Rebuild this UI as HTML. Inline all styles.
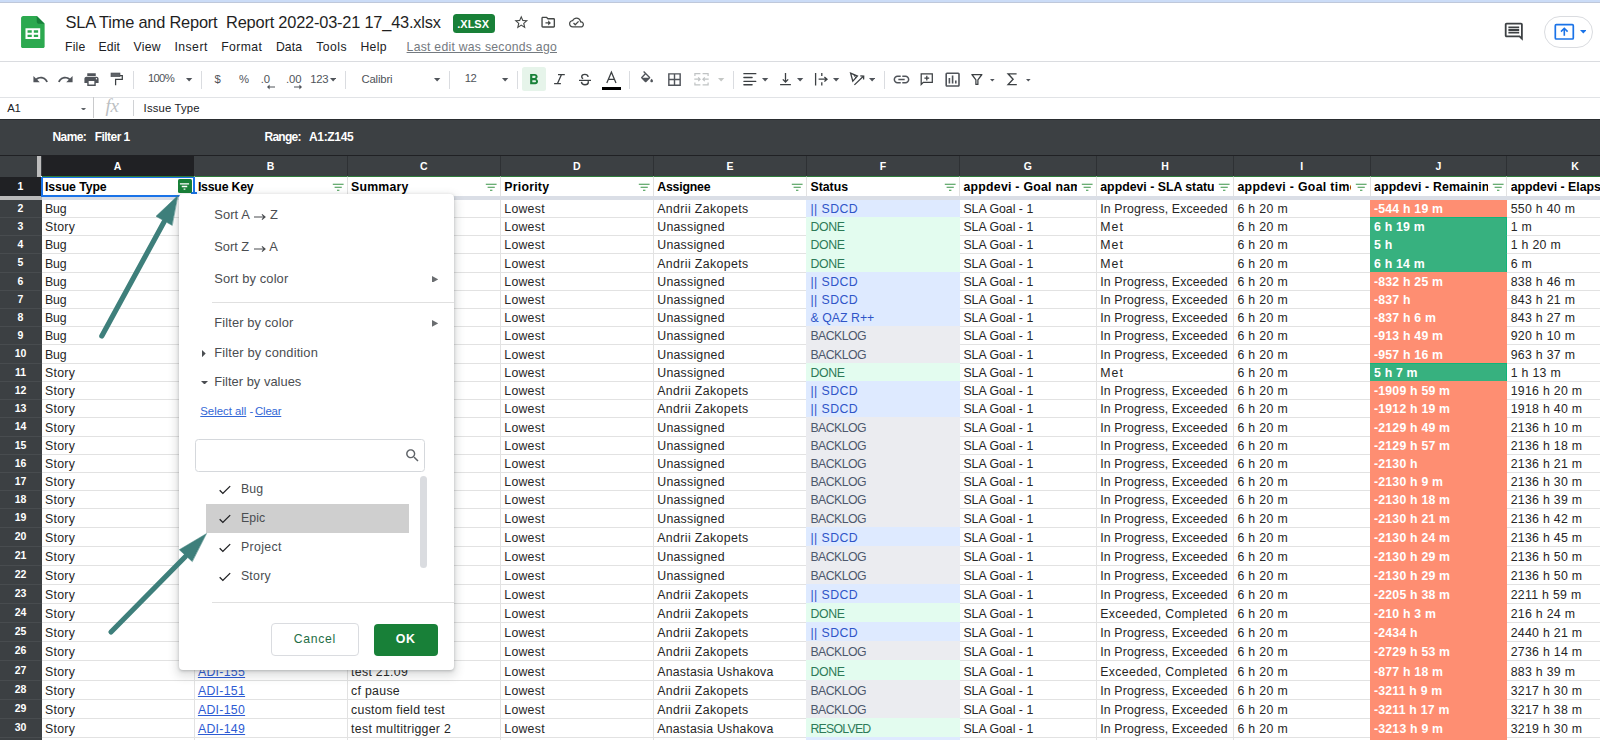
<!DOCTYPE html>
<html><head><meta charset="utf-8"><title>SLA Time and Report</title>
<style>
*{box-sizing:border-box;margin:0;padding:0}
html,body{width:1600px;height:740px;overflow:hidden;background:#fff}
body{font-family:"Liberation Sans",sans-serif;position:relative;color:#202124}
.abs{position:absolute}
.t{position:absolute;white-space:pre;line-height:20px}
svg{position:absolute;display:block}
/* top */
#strip{left:0;top:0;width:1600px;height:2px;background:#cbdcf7}
#strip2{left:0;top:2px;width:1600px;height:1px;background:#bfc8da}
.hl{position:absolute;left:0;width:1600px;height:1px;background:#dadce0}
.vs{position:absolute;width:1px;background:#dadce0;top:71px;height:18px}
.tb{fill:#50545a}
.dd{position:absolute;width:0;height:0;border-left:3.5px solid transparent;border-right:3.5px solid transparent;border-top:3.5px solid #444746}
/* dark filter bar */
#fbar{left:0;top:119px;width:1600px;height:37px;background:#3c4043;border-top:1px solid #2a2d30;border-bottom:1px solid #202124}
/* col headers */
#chrow{left:0;top:156px;width:1600px;height:20px;background:#3c4043}
.ch{position:absolute;top:156px;height:20px;line-height:20.4px;color:#fff;font-weight:700;font-size:10.5px;text-align:center;background:#3c4043;border-right:1px solid #2e3134}
.ch.sel{background:#202124;border-right:none}
/* row headers */
.rh{position:absolute;left:0;width:42px;background:#3c4043;color:#fff;font-weight:700;font-size:10.5px;text-align:center;border-bottom:1px solid #484c4f;padding-right:1px}
/* header row */
.h1{position:absolute;top:176px;height:19.5px;background:#fff;border-right:1px solid #e2e2e2;border-top:1px solid #2f7d3c;overflow:hidden}
.h1t{position:absolute;left:3.4px;top:1px;right:18.5px;height:18px;line-height:18px;font-size:12.3px;font-weight:700;color:#000;white-space:pre;overflow:hidden}
.fi{right:1.4px;top:2.6px;width:14.4px;height:14.4px;fill:#3a9447}
/* grid */
#grid{left:41.5px;top:0;width:1559px;height:740px}
.r{position:absolute;left:0;width:1559px}
.c{position:absolute;top:0;height:100%;border-right:1px solid #e2e2e2;border-bottom:1px solid #e2e2e2;padding-left:3.4px;font-size:12.3px;white-space:pre;overflow:hidden;color:#262626}
.c.f{border:none;margin-left:-1px;padding-left:4.4px}
.c.j{color:#fff;font-weight:700}
.c.lk{color:#2d5bd3}
.c.lk span{text-decoration:underline}
/* popup */
#menu{left:178.5px;top:194px;width:275px;height:475.5px;background:#fff;border-radius:4px;box-shadow:0 1px 3px rgba(60,64,67,.3),0 4px 8px 3px rgba(60,64,67,.15)}
.mi{position:absolute;white-space:pre;line-height:20px;font-size:12.5px;color:#4a4d51}
</style></head><body>

<!-- ============ GRID (under everything) ============ -->
<div id="grid" class="abs">
<!-- GRID -->
<div class="r" style="top:200px;height:18px;line-height:18px"><div class="c" style="left:0.0px;width:153.0px;"><span style="letter-spacing:-0.06px">Bug</span></div><div class="c" style="left:153.0px;width:153.2px;"></div><div class="c" style="left:306.2px;width:153.2px;"></div><div class="c" style="left:459.4px;width:153.0px;"><span style="letter-spacing:0.26px">Lowest</span></div><div class="c" style="left:612.4px;width:153.2px;"><span style="letter-spacing:0.39px">Andrii Zakopets</span></div><div class="c f" style="left:765.6px;width:153.9px;background:#deeaff;color:#2f55c8;box-shadow:0 -1px #deeaff;"><span style="letter-spacing:0.41px">|| SDCD</span></div><div class="c" style="left:918.5px;width:136.9px;"><span style="letter-spacing:0.01px">SLA Goal - 1</span></div><div class="c" style="left:1055.4px;width:137.1px;"><span style="letter-spacing:0.14px">In Progress, Exceeded</span></div><div class="c" style="left:1192.5px;width:136.6px;"><span style="letter-spacing:0.34px">6 h 20 m</span></div><div class="c f j" style="left:1329.1px;width:137.7px;background:#fe8e72;box-shadow:0 -1px #fe8e72;"><span style="letter-spacing:0.20px">-544 h 19 m</span></div><div class="c" style="left:1465.8px;width:136.7px;"><span style="letter-spacing:0.30px">550 h 40 m</span></div></div>
<div class="r" style="top:218px;height:18px;line-height:18px"><div class="c" style="left:0.0px;width:153.0px;"><span style="letter-spacing:0.34px">Story</span></div><div class="c" style="left:153.0px;width:153.2px;"></div><div class="c" style="left:306.2px;width:153.2px;"></div><div class="c" style="left:459.4px;width:153.0px;"><span style="letter-spacing:0.26px">Lowest</span></div><div class="c" style="left:612.4px;width:153.2px;"><span style="letter-spacing:0.25px">Unassigned</span></div><div class="c f" style="left:765.6px;width:153.9px;background:#e3fcef;color:#2d7a57;box-shadow:0 -1px #e3fcef;"><span style="letter-spacing:-0.33px">DONE</span></div><div class="c" style="left:918.5px;width:136.9px;"><span style="letter-spacing:0.01px">SLA Goal - 1</span></div><div class="c" style="left:1055.4px;width:137.1px;"><span style="letter-spacing:1.07px">Met</span></div><div class="c" style="left:1192.5px;width:136.6px;"><span style="letter-spacing:0.34px">6 h 20 m</span></div><div class="c f j" style="left:1329.1px;width:137.7px;background:#37b17f;box-shadow:inset -1px 0 #10b47b,0 -1px #10b47b;"><span style="letter-spacing:0.20px">6 h 19 m</span></div><div class="c" style="left:1465.8px;width:136.7px;"><span style="letter-spacing:0.30px">1 m</span></div></div>
<div class="r" style="top:236px;height:18px;line-height:18px"><div class="c" style="left:0.0px;width:153.0px;"><span style="letter-spacing:-0.06px">Bug</span></div><div class="c" style="left:153.0px;width:153.2px;"></div><div class="c" style="left:306.2px;width:153.2px;"></div><div class="c" style="left:459.4px;width:153.0px;"><span style="letter-spacing:0.26px">Lowest</span></div><div class="c" style="left:612.4px;width:153.2px;"><span style="letter-spacing:0.25px">Unassigned</span></div><div class="c f" style="left:765.6px;width:153.9px;background:#e3fcef;color:#2d7a57;box-shadow:0 -1px #e3fcef;"><span style="letter-spacing:-0.33px">DONE</span></div><div class="c" style="left:918.5px;width:136.9px;"><span style="letter-spacing:0.01px">SLA Goal - 1</span></div><div class="c" style="left:1055.4px;width:137.1px;"><span style="letter-spacing:1.07px">Met</span></div><div class="c" style="left:1192.5px;width:136.6px;"><span style="letter-spacing:0.34px">6 h 20 m</span></div><div class="c f j" style="left:1329.1px;width:137.7px;background:#37b17f;box-shadow:inset -1px 0 #10b47b,0 -1px #37b17f;"><span style="letter-spacing:0.20px">5 h</span></div><div class="c" style="left:1465.8px;width:136.7px;"><span style="letter-spacing:0.30px">1 h 20 m</span></div></div>
<div class="r" style="top:254px;height:19px;line-height:20px"><div class="c" style="left:0.0px;width:153.0px;"><span style="letter-spacing:-0.06px">Bug</span></div><div class="c" style="left:153.0px;width:153.2px;"></div><div class="c" style="left:306.2px;width:153.2px;"></div><div class="c" style="left:459.4px;width:153.0px;"><span style="letter-spacing:0.26px">Lowest</span></div><div class="c" style="left:612.4px;width:153.2px;"><span style="letter-spacing:0.39px">Andrii Zakopets</span></div><div class="c f" style="left:765.6px;width:153.9px;background:#e3fcef;color:#2d7a57;box-shadow:0 -1px #e3fcef;"><span style="letter-spacing:-0.33px">DONE</span></div><div class="c" style="left:918.5px;width:136.9px;"><span style="letter-spacing:0.01px">SLA Goal - 1</span></div><div class="c" style="left:1055.4px;width:137.1px;"><span style="letter-spacing:1.07px">Met</span></div><div class="c" style="left:1192.5px;width:136.6px;"><span style="letter-spacing:0.34px">6 h 20 m</span></div><div class="c f j" style="left:1329.1px;width:137.7px;background:#37b17f;box-shadow:inset -1px 0 #10b47b,0 -1px #37b17f;"><span style="letter-spacing:0.20px">6 h 14 m</span></div><div class="c" style="left:1465.8px;width:136.7px;"><span style="letter-spacing:0.30px">6 m</span></div></div>
<div class="r" style="top:273px;height:18px;line-height:18px"><div class="c" style="left:0.0px;width:153.0px;"><span style="letter-spacing:-0.06px">Bug</span></div><div class="c" style="left:153.0px;width:153.2px;"></div><div class="c" style="left:306.2px;width:153.2px;"></div><div class="c" style="left:459.4px;width:153.0px;"><span style="letter-spacing:0.26px">Lowest</span></div><div class="c" style="left:612.4px;width:153.2px;"><span style="letter-spacing:0.25px">Unassigned</span></div><div class="c f" style="left:765.6px;width:153.9px;background:#deeaff;color:#2f55c8;box-shadow:0 -1px #deeaff;"><span style="letter-spacing:0.41px">|| SDCD</span></div><div class="c" style="left:918.5px;width:136.9px;"><span style="letter-spacing:0.01px">SLA Goal - 1</span></div><div class="c" style="left:1055.4px;width:137.1px;"><span style="letter-spacing:0.14px">In Progress, Exceeded</span></div><div class="c" style="left:1192.5px;width:136.6px;"><span style="letter-spacing:0.34px">6 h 20 m</span></div><div class="c f j" style="left:1329.1px;width:137.7px;background:#fe8e72;box-shadow:0 -1px #fe8e72;"><span style="letter-spacing:0.20px">-832 h 25 m</span></div><div class="c" style="left:1465.8px;width:136.7px;"><span style="letter-spacing:0.30px">838 h 46 m</span></div></div>
<div class="r" style="top:291px;height:18px;line-height:18px"><div class="c" style="left:0.0px;width:153.0px;"><span style="letter-spacing:-0.06px">Bug</span></div><div class="c" style="left:153.0px;width:153.2px;"></div><div class="c" style="left:306.2px;width:153.2px;"></div><div class="c" style="left:459.4px;width:153.0px;"><span style="letter-spacing:0.26px">Lowest</span></div><div class="c" style="left:612.4px;width:153.2px;"><span style="letter-spacing:0.25px">Unassigned</span></div><div class="c f" style="left:765.6px;width:153.9px;background:#deeaff;color:#2f55c8;box-shadow:0 -1px #deeaff;"><span style="letter-spacing:0.41px">|| SDCD</span></div><div class="c" style="left:918.5px;width:136.9px;"><span style="letter-spacing:0.01px">SLA Goal - 1</span></div><div class="c" style="left:1055.4px;width:137.1px;"><span style="letter-spacing:0.14px">In Progress, Exceeded</span></div><div class="c" style="left:1192.5px;width:136.6px;"><span style="letter-spacing:0.34px">6 h 20 m</span></div><div class="c f j" style="left:1329.1px;width:137.7px;background:#fe8e72;box-shadow:0 -1px #fe8e72;"><span style="letter-spacing:0.20px">-837 h</span></div><div class="c" style="left:1465.8px;width:136.7px;"><span style="letter-spacing:0.30px">843 h 21 m</span></div></div>
<div class="r" style="top:309px;height:18px;line-height:18px"><div class="c" style="left:0.0px;width:153.0px;"><span style="letter-spacing:-0.06px">Bug</span></div><div class="c" style="left:153.0px;width:153.2px;"></div><div class="c" style="left:306.2px;width:153.2px;"></div><div class="c" style="left:459.4px;width:153.0px;"><span style="letter-spacing:0.26px">Lowest</span></div><div class="c" style="left:612.4px;width:153.2px;"><span style="letter-spacing:0.25px">Unassigned</span></div><div class="c f" style="left:765.6px;width:153.9px;background:#deeaff;color:#2f55c8;box-shadow:0 -1px #deeaff;"><span style="letter-spacing:0.03px">&amp; QAZ R++</span></div><div class="c" style="left:918.5px;width:136.9px;"><span style="letter-spacing:0.01px">SLA Goal - 1</span></div><div class="c" style="left:1055.4px;width:137.1px;"><span style="letter-spacing:0.14px">In Progress, Exceeded</span></div><div class="c" style="left:1192.5px;width:136.6px;"><span style="letter-spacing:0.34px">6 h 20 m</span></div><div class="c f j" style="left:1329.1px;width:137.7px;background:#fe8e72;box-shadow:0 -1px #fe8e72;"><span style="letter-spacing:0.20px">-837 h 6 m</span></div><div class="c" style="left:1465.8px;width:136.7px;"><span style="letter-spacing:0.30px">843 h 27 m</span></div></div>
<div class="r" style="top:327px;height:18px;line-height:18px"><div class="c" style="left:0.0px;width:153.0px;"><span style="letter-spacing:-0.06px">Bug</span></div><div class="c" style="left:153.0px;width:153.2px;"></div><div class="c" style="left:306.2px;width:153.2px;"></div><div class="c" style="left:459.4px;width:153.0px;"><span style="letter-spacing:0.26px">Lowest</span></div><div class="c" style="left:612.4px;width:153.2px;"><span style="letter-spacing:0.25px">Unassigned</span></div><div class="c f" style="left:765.6px;width:153.9px;background:#ebecf0;color:#4d586c;box-shadow:0 -1px #ebecf0;"><span style="letter-spacing:-0.57px">BACKLOG</span></div><div class="c" style="left:918.5px;width:136.9px;"><span style="letter-spacing:0.01px">SLA Goal - 1</span></div><div class="c" style="left:1055.4px;width:137.1px;"><span style="letter-spacing:0.14px">In Progress, Exceeded</span></div><div class="c" style="left:1192.5px;width:136.6px;"><span style="letter-spacing:0.34px">6 h 20 m</span></div><div class="c f j" style="left:1329.1px;width:137.7px;background:#fe8e72;box-shadow:0 -1px #fe8e72;"><span style="letter-spacing:0.20px">-913 h 49 m</span></div><div class="c" style="left:1465.8px;width:136.7px;"><span style="letter-spacing:0.30px">920 h 10 m</span></div></div>
<div class="r" style="top:345px;height:19px;line-height:20px"><div class="c" style="left:0.0px;width:153.0px;"><span style="letter-spacing:-0.06px">Bug</span></div><div class="c" style="left:153.0px;width:153.2px;"></div><div class="c" style="left:306.2px;width:153.2px;"></div><div class="c" style="left:459.4px;width:153.0px;"><span style="letter-spacing:0.26px">Lowest</span></div><div class="c" style="left:612.4px;width:153.2px;"><span style="letter-spacing:0.25px">Unassigned</span></div><div class="c f" style="left:765.6px;width:153.9px;background:#ebecf0;color:#4d586c;box-shadow:0 -1px #ebecf0;"><span style="letter-spacing:-0.57px">BACKLOG</span></div><div class="c" style="left:918.5px;width:136.9px;"><span style="letter-spacing:0.01px">SLA Goal - 1</span></div><div class="c" style="left:1055.4px;width:137.1px;"><span style="letter-spacing:0.14px">In Progress, Exceeded</span></div><div class="c" style="left:1192.5px;width:136.6px;"><span style="letter-spacing:0.34px">6 h 20 m</span></div><div class="c f j" style="left:1329.1px;width:137.7px;background:#fe8e72;box-shadow:0 -1px #fe8e72;"><span style="letter-spacing:0.20px">-957 h 16 m</span></div><div class="c" style="left:1465.8px;width:136.7px;"><span style="letter-spacing:0.30px">963 h 37 m</span></div></div>
<div class="r" style="top:364px;height:18px;line-height:18px"><div class="c" style="left:0.0px;width:153.0px;"><span style="letter-spacing:0.34px">Story</span></div><div class="c" style="left:153.0px;width:153.2px;"></div><div class="c" style="left:306.2px;width:153.2px;"></div><div class="c" style="left:459.4px;width:153.0px;"><span style="letter-spacing:0.26px">Lowest</span></div><div class="c" style="left:612.4px;width:153.2px;"><span style="letter-spacing:0.25px">Unassigned</span></div><div class="c f" style="left:765.6px;width:153.9px;background:#e3fcef;color:#2d7a57;box-shadow:0 -1px #e3fcef;"><span style="letter-spacing:-0.33px">DONE</span></div><div class="c" style="left:918.5px;width:136.9px;"><span style="letter-spacing:0.01px">SLA Goal - 1</span></div><div class="c" style="left:1055.4px;width:137.1px;"><span style="letter-spacing:1.07px">Met</span></div><div class="c" style="left:1192.5px;width:136.6px;"><span style="letter-spacing:0.34px">6 h 20 m</span></div><div class="c f j" style="left:1329.1px;width:137.7px;background:#37b17f;box-shadow:inset -1px 0 #10b47b,0 -1px #10b47b;"><span style="letter-spacing:0.20px">5 h 7 m</span></div><div class="c" style="left:1465.8px;width:136.7px;"><span style="letter-spacing:0.30px">1 h 13 m</span></div></div>
<div class="r" style="top:382px;height:18px;line-height:18px"><div class="c" style="left:0.0px;width:153.0px;"><span style="letter-spacing:0.34px">Story</span></div><div class="c" style="left:153.0px;width:153.2px;"></div><div class="c" style="left:306.2px;width:153.2px;"></div><div class="c" style="left:459.4px;width:153.0px;"><span style="letter-spacing:0.26px">Lowest</span></div><div class="c" style="left:612.4px;width:153.2px;"><span style="letter-spacing:0.39px">Andrii Zakopets</span></div><div class="c f" style="left:765.6px;width:153.9px;background:#deeaff;color:#2f55c8;box-shadow:0 -1px #deeaff;"><span style="letter-spacing:0.41px">|| SDCD</span></div><div class="c" style="left:918.5px;width:136.9px;"><span style="letter-spacing:0.01px">SLA Goal - 1</span></div><div class="c" style="left:1055.4px;width:137.1px;"><span style="letter-spacing:0.14px">In Progress, Exceeded</span></div><div class="c" style="left:1192.5px;width:136.6px;"><span style="letter-spacing:0.34px">6 h 20 m</span></div><div class="c f j" style="left:1329.1px;width:137.7px;background:#fe8e72;box-shadow:0 -1px #fe8e72;"><span style="letter-spacing:0.20px">-1909 h 59 m</span></div><div class="c" style="left:1465.8px;width:136.7px;"><span style="letter-spacing:0.30px">1916 h 20 m</span></div></div>
<div class="r" style="top:400px;height:18px;line-height:18px"><div class="c" style="left:0.0px;width:153.0px;"><span style="letter-spacing:0.34px">Story</span></div><div class="c" style="left:153.0px;width:153.2px;"></div><div class="c" style="left:306.2px;width:153.2px;"></div><div class="c" style="left:459.4px;width:153.0px;"><span style="letter-spacing:0.26px">Lowest</span></div><div class="c" style="left:612.4px;width:153.2px;"><span style="letter-spacing:0.39px">Andrii Zakopets</span></div><div class="c f" style="left:765.6px;width:153.9px;background:#deeaff;color:#2f55c8;box-shadow:0 -1px #deeaff;"><span style="letter-spacing:0.41px">|| SDCD</span></div><div class="c" style="left:918.5px;width:136.9px;"><span style="letter-spacing:0.01px">SLA Goal - 1</span></div><div class="c" style="left:1055.4px;width:137.1px;"><span style="letter-spacing:0.14px">In Progress, Exceeded</span></div><div class="c" style="left:1192.5px;width:136.6px;"><span style="letter-spacing:0.34px">6 h 20 m</span></div><div class="c f j" style="left:1329.1px;width:137.7px;background:#fe8e72;box-shadow:0 -1px #fe8e72;"><span style="letter-spacing:0.20px">-1912 h 19 m</span></div><div class="c" style="left:1465.8px;width:136.7px;"><span style="letter-spacing:0.30px">1918 h 40 m</span></div></div>
<div class="r" style="top:418px;height:19px;line-height:20px"><div class="c" style="left:0.0px;width:153.0px;"><span style="letter-spacing:0.34px">Story</span></div><div class="c" style="left:153.0px;width:153.2px;"></div><div class="c" style="left:306.2px;width:153.2px;"></div><div class="c" style="left:459.4px;width:153.0px;"><span style="letter-spacing:0.26px">Lowest</span></div><div class="c" style="left:612.4px;width:153.2px;"><span style="letter-spacing:0.25px">Unassigned</span></div><div class="c f" style="left:765.6px;width:153.9px;background:#ebecf0;color:#4d586c;box-shadow:0 -1px #ebecf0;"><span style="letter-spacing:-0.57px">BACKLOG</span></div><div class="c" style="left:918.5px;width:136.9px;"><span style="letter-spacing:0.01px">SLA Goal - 1</span></div><div class="c" style="left:1055.4px;width:137.1px;"><span style="letter-spacing:0.14px">In Progress, Exceeded</span></div><div class="c" style="left:1192.5px;width:136.6px;"><span style="letter-spacing:0.34px">6 h 20 m</span></div><div class="c f j" style="left:1329.1px;width:137.7px;background:#fe8e72;box-shadow:0 -1px #fe8e72;"><span style="letter-spacing:0.20px">-2129 h 49 m</span></div><div class="c" style="left:1465.8px;width:136.7px;"><span style="letter-spacing:0.30px">2136 h 10 m</span></div></div>
<div class="r" style="top:437px;height:18px;line-height:18px"><div class="c" style="left:0.0px;width:153.0px;"><span style="letter-spacing:0.34px">Story</span></div><div class="c" style="left:153.0px;width:153.2px;"></div><div class="c" style="left:306.2px;width:153.2px;"></div><div class="c" style="left:459.4px;width:153.0px;"><span style="letter-spacing:0.26px">Lowest</span></div><div class="c" style="left:612.4px;width:153.2px;"><span style="letter-spacing:0.25px">Unassigned</span></div><div class="c f" style="left:765.6px;width:153.9px;background:#ebecf0;color:#4d586c;box-shadow:0 -1px #ebecf0;"><span style="letter-spacing:-0.57px">BACKLOG</span></div><div class="c" style="left:918.5px;width:136.9px;"><span style="letter-spacing:0.01px">SLA Goal - 1</span></div><div class="c" style="left:1055.4px;width:137.1px;"><span style="letter-spacing:0.14px">In Progress, Exceeded</span></div><div class="c" style="left:1192.5px;width:136.6px;"><span style="letter-spacing:0.34px">6 h 20 m</span></div><div class="c f j" style="left:1329.1px;width:137.7px;background:#fe8e72;box-shadow:0 -1px #fe8e72;"><span style="letter-spacing:0.20px">-2129 h 57 m</span></div><div class="c" style="left:1465.8px;width:136.7px;"><span style="letter-spacing:0.30px">2136 h 18 m</span></div></div>
<div class="r" style="top:455px;height:18px;line-height:18px"><div class="c" style="left:0.0px;width:153.0px;"><span style="letter-spacing:0.34px">Story</span></div><div class="c" style="left:153.0px;width:153.2px;"></div><div class="c" style="left:306.2px;width:153.2px;"></div><div class="c" style="left:459.4px;width:153.0px;"><span style="letter-spacing:0.26px">Lowest</span></div><div class="c" style="left:612.4px;width:153.2px;"><span style="letter-spacing:0.25px">Unassigned</span></div><div class="c f" style="left:765.6px;width:153.9px;background:#ebecf0;color:#4d586c;box-shadow:0 -1px #ebecf0;"><span style="letter-spacing:-0.57px">BACKLOG</span></div><div class="c" style="left:918.5px;width:136.9px;"><span style="letter-spacing:0.01px">SLA Goal - 1</span></div><div class="c" style="left:1055.4px;width:137.1px;"><span style="letter-spacing:0.14px">In Progress, Exceeded</span></div><div class="c" style="left:1192.5px;width:136.6px;"><span style="letter-spacing:0.34px">6 h 20 m</span></div><div class="c f j" style="left:1329.1px;width:137.7px;background:#fe8e72;box-shadow:0 -1px #fe8e72;"><span style="letter-spacing:0.20px">-2130 h</span></div><div class="c" style="left:1465.8px;width:136.7px;"><span style="letter-spacing:0.30px">2136 h 21 m</span></div></div>
<div class="r" style="top:473px;height:18px;line-height:18px"><div class="c" style="left:0.0px;width:153.0px;"><span style="letter-spacing:0.34px">Story</span></div><div class="c" style="left:153.0px;width:153.2px;"></div><div class="c" style="left:306.2px;width:153.2px;"></div><div class="c" style="left:459.4px;width:153.0px;"><span style="letter-spacing:0.26px">Lowest</span></div><div class="c" style="left:612.4px;width:153.2px;"><span style="letter-spacing:0.25px">Unassigned</span></div><div class="c f" style="left:765.6px;width:153.9px;background:#ebecf0;color:#4d586c;box-shadow:0 -1px #ebecf0;"><span style="letter-spacing:-0.57px">BACKLOG</span></div><div class="c" style="left:918.5px;width:136.9px;"><span style="letter-spacing:0.01px">SLA Goal - 1</span></div><div class="c" style="left:1055.4px;width:137.1px;"><span style="letter-spacing:0.14px">In Progress, Exceeded</span></div><div class="c" style="left:1192.5px;width:136.6px;"><span style="letter-spacing:0.34px">6 h 20 m</span></div><div class="c f j" style="left:1329.1px;width:137.7px;background:#fe8e72;box-shadow:0 -1px #fe8e72;"><span style="letter-spacing:0.20px">-2130 h 9 m</span></div><div class="c" style="left:1465.8px;width:136.7px;"><span style="letter-spacing:0.30px">2136 h 30 m</span></div></div>
<div class="r" style="top:491px;height:18px;line-height:18px"><div class="c" style="left:0.0px;width:153.0px;"><span style="letter-spacing:0.34px">Story</span></div><div class="c" style="left:153.0px;width:153.2px;"></div><div class="c" style="left:306.2px;width:153.2px;"></div><div class="c" style="left:459.4px;width:153.0px;"><span style="letter-spacing:0.26px">Lowest</span></div><div class="c" style="left:612.4px;width:153.2px;"><span style="letter-spacing:0.25px">Unassigned</span></div><div class="c f" style="left:765.6px;width:153.9px;background:#ebecf0;color:#4d586c;box-shadow:0 -1px #ebecf0;"><span style="letter-spacing:-0.57px">BACKLOG</span></div><div class="c" style="left:918.5px;width:136.9px;"><span style="letter-spacing:0.01px">SLA Goal - 1</span></div><div class="c" style="left:1055.4px;width:137.1px;"><span style="letter-spacing:0.14px">In Progress, Exceeded</span></div><div class="c" style="left:1192.5px;width:136.6px;"><span style="letter-spacing:0.34px">6 h 20 m</span></div><div class="c f j" style="left:1329.1px;width:137.7px;background:#fe8e72;box-shadow:0 -1px #fe8e72;"><span style="letter-spacing:0.20px">-2130 h 18 m</span></div><div class="c" style="left:1465.8px;width:136.7px;"><span style="letter-spacing:0.30px">2136 h 39 m</span></div></div>
<div class="r" style="top:509px;height:19px;line-height:20px"><div class="c" style="left:0.0px;width:153.0px;"><span style="letter-spacing:0.34px">Story</span></div><div class="c" style="left:153.0px;width:153.2px;"></div><div class="c" style="left:306.2px;width:153.2px;"></div><div class="c" style="left:459.4px;width:153.0px;"><span style="letter-spacing:0.26px">Lowest</span></div><div class="c" style="left:612.4px;width:153.2px;"><span style="letter-spacing:0.25px">Unassigned</span></div><div class="c f" style="left:765.6px;width:153.9px;background:#ebecf0;color:#4d586c;box-shadow:0 -1px #ebecf0;"><span style="letter-spacing:-0.57px">BACKLOG</span></div><div class="c" style="left:918.5px;width:136.9px;"><span style="letter-spacing:0.01px">SLA Goal - 1</span></div><div class="c" style="left:1055.4px;width:137.1px;"><span style="letter-spacing:0.14px">In Progress, Exceeded</span></div><div class="c" style="left:1192.5px;width:136.6px;"><span style="letter-spacing:0.34px">6 h 20 m</span></div><div class="c f j" style="left:1329.1px;width:137.7px;background:#fe8e72;box-shadow:0 -1px #fe8e72;"><span style="letter-spacing:0.20px">-2130 h 21 m</span></div><div class="c" style="left:1465.8px;width:136.7px;"><span style="letter-spacing:0.30px">2136 h 42 m</span></div></div>
<div class="r" style="top:528px;height:19px;line-height:20px"><div class="c" style="left:0.0px;width:153.0px;"><span style="letter-spacing:0.34px">Story</span></div><div class="c" style="left:153.0px;width:153.2px;"></div><div class="c" style="left:306.2px;width:153.2px;"></div><div class="c" style="left:459.4px;width:153.0px;"><span style="letter-spacing:0.26px">Lowest</span></div><div class="c" style="left:612.4px;width:153.2px;"><span style="letter-spacing:0.39px">Andrii Zakopets</span></div><div class="c f" style="left:765.6px;width:153.9px;background:#deeaff;color:#2f55c8;box-shadow:0 -1px #deeaff;"><span style="letter-spacing:0.41px">|| SDCD</span></div><div class="c" style="left:918.5px;width:136.9px;"><span style="letter-spacing:0.01px">SLA Goal - 1</span></div><div class="c" style="left:1055.4px;width:137.1px;"><span style="letter-spacing:0.14px">In Progress, Exceeded</span></div><div class="c" style="left:1192.5px;width:136.6px;"><span style="letter-spacing:0.34px">6 h 20 m</span></div><div class="c f j" style="left:1329.1px;width:137.7px;background:#fe8e72;box-shadow:0 -1px #fe8e72;"><span style="letter-spacing:0.20px">-2130 h 24 m</span></div><div class="c" style="left:1465.8px;width:136.7px;"><span style="letter-spacing:0.30px">2136 h 45 m</span></div></div>
<div class="r" style="top:547px;height:19px;line-height:20px"><div class="c" style="left:0.0px;width:153.0px;"><span style="letter-spacing:0.34px">Story</span></div><div class="c" style="left:153.0px;width:153.2px;"></div><div class="c" style="left:306.2px;width:153.2px;"></div><div class="c" style="left:459.4px;width:153.0px;"><span style="letter-spacing:0.26px">Lowest</span></div><div class="c" style="left:612.4px;width:153.2px;"><span style="letter-spacing:0.25px">Unassigned</span></div><div class="c f" style="left:765.6px;width:153.9px;background:#ebecf0;color:#4d586c;box-shadow:0 -1px #ebecf0;"><span style="letter-spacing:-0.57px">BACKLOG</span></div><div class="c" style="left:918.5px;width:136.9px;"><span style="letter-spacing:0.01px">SLA Goal - 1</span></div><div class="c" style="left:1055.4px;width:137.1px;"><span style="letter-spacing:0.14px">In Progress, Exceeded</span></div><div class="c" style="left:1192.5px;width:136.6px;"><span style="letter-spacing:0.34px">6 h 20 m</span></div><div class="c f j" style="left:1329.1px;width:137.7px;background:#fe8e72;box-shadow:0 -1px #fe8e72;"><span style="letter-spacing:0.20px">-2130 h 29 m</span></div><div class="c" style="left:1465.8px;width:136.7px;"><span style="letter-spacing:0.30px">2136 h 50 m</span></div></div>
<div class="r" style="top:566px;height:19px;line-height:20px"><div class="c" style="left:0.0px;width:153.0px;"><span style="letter-spacing:0.34px">Story</span></div><div class="c" style="left:153.0px;width:153.2px;"></div><div class="c" style="left:306.2px;width:153.2px;"></div><div class="c" style="left:459.4px;width:153.0px;"><span style="letter-spacing:0.26px">Lowest</span></div><div class="c" style="left:612.4px;width:153.2px;"><span style="letter-spacing:0.25px">Unassigned</span></div><div class="c f" style="left:765.6px;width:153.9px;background:#ebecf0;color:#4d586c;box-shadow:0 -1px #ebecf0;"><span style="letter-spacing:-0.57px">BACKLOG</span></div><div class="c" style="left:918.5px;width:136.9px;"><span style="letter-spacing:0.01px">SLA Goal - 1</span></div><div class="c" style="left:1055.4px;width:137.1px;"><span style="letter-spacing:0.14px">In Progress, Exceeded</span></div><div class="c" style="left:1192.5px;width:136.6px;"><span style="letter-spacing:0.34px">6 h 20 m</span></div><div class="c f j" style="left:1329.1px;width:137.7px;background:#fe8e72;box-shadow:0 -1px #fe8e72;"><span style="letter-spacing:0.20px">-2130 h 29 m</span></div><div class="c" style="left:1465.8px;width:136.7px;"><span style="letter-spacing:0.30px">2136 h 50 m</span></div></div>
<div class="r" style="top:585px;height:19px;line-height:20px"><div class="c" style="left:0.0px;width:153.0px;"><span style="letter-spacing:0.34px">Story</span></div><div class="c" style="left:153.0px;width:153.2px;"></div><div class="c" style="left:306.2px;width:153.2px;"></div><div class="c" style="left:459.4px;width:153.0px;"><span style="letter-spacing:0.26px">Lowest</span></div><div class="c" style="left:612.4px;width:153.2px;"><span style="letter-spacing:0.39px">Andrii Zakopets</span></div><div class="c f" style="left:765.6px;width:153.9px;background:#deeaff;color:#2f55c8;box-shadow:0 -1px #deeaff;"><span style="letter-spacing:0.41px">|| SDCD</span></div><div class="c" style="left:918.5px;width:136.9px;"><span style="letter-spacing:0.01px">SLA Goal - 1</span></div><div class="c" style="left:1055.4px;width:137.1px;"><span style="letter-spacing:0.14px">In Progress, Exceeded</span></div><div class="c" style="left:1192.5px;width:136.6px;"><span style="letter-spacing:0.34px">6 h 20 m</span></div><div class="c f j" style="left:1329.1px;width:137.7px;background:#fe8e72;box-shadow:0 -1px #fe8e72;"><span style="letter-spacing:0.20px">-2205 h 38 m</span></div><div class="c" style="left:1465.8px;width:136.7px;"><span style="letter-spacing:0.30px">2211 h 59 m</span></div></div>
<div class="r" style="top:604px;height:19px;line-height:20px"><div class="c" style="left:0.0px;width:153.0px;"><span style="letter-spacing:0.34px">Story</span></div><div class="c" style="left:153.0px;width:153.2px;"></div><div class="c" style="left:306.2px;width:153.2px;"></div><div class="c" style="left:459.4px;width:153.0px;"><span style="letter-spacing:0.26px">Lowest</span></div><div class="c" style="left:612.4px;width:153.2px;"><span style="letter-spacing:0.39px">Andrii Zakopets</span></div><div class="c f" style="left:765.6px;width:153.9px;background:#e3fcef;color:#2d7a57;box-shadow:0 -1px #e3fcef;"><span style="letter-spacing:-0.33px">DONE</span></div><div class="c" style="left:918.5px;width:136.9px;"><span style="letter-spacing:0.01px">SLA Goal - 1</span></div><div class="c" style="left:1055.4px;width:137.1px;"><span style="letter-spacing:0.34px">Exceeded, Completed</span></div><div class="c" style="left:1192.5px;width:136.6px;"><span style="letter-spacing:0.34px">6 h 20 m</span></div><div class="c f j" style="left:1329.1px;width:137.7px;background:#fe8e72;box-shadow:0 -1px #fe8e72;"><span style="letter-spacing:0.20px">-210 h 3 m</span></div><div class="c" style="left:1465.8px;width:136.7px;"><span style="letter-spacing:0.30px">216 h 24 m</span></div></div>
<div class="r" style="top:623px;height:19px;line-height:20px"><div class="c" style="left:0.0px;width:153.0px;"><span style="letter-spacing:0.34px">Story</span></div><div class="c" style="left:153.0px;width:153.2px;"></div><div class="c" style="left:306.2px;width:153.2px;"></div><div class="c" style="left:459.4px;width:153.0px;"><span style="letter-spacing:0.26px">Lowest</span></div><div class="c" style="left:612.4px;width:153.2px;"><span style="letter-spacing:0.39px">Andrii Zakopets</span></div><div class="c f" style="left:765.6px;width:153.9px;background:#deeaff;color:#2f55c8;box-shadow:0 -1px #deeaff;"><span style="letter-spacing:0.41px">|| SDCD</span></div><div class="c" style="left:918.5px;width:136.9px;"><span style="letter-spacing:0.01px">SLA Goal - 1</span></div><div class="c" style="left:1055.4px;width:137.1px;"><span style="letter-spacing:0.14px">In Progress, Exceeded</span></div><div class="c" style="left:1192.5px;width:136.6px;"><span style="letter-spacing:0.34px">6 h 20 m</span></div><div class="c f j" style="left:1329.1px;width:137.7px;background:#fe8e72;box-shadow:0 -1px #fe8e72;"><span style="letter-spacing:0.20px">-2434 h</span></div><div class="c" style="left:1465.8px;width:136.7px;"><span style="letter-spacing:0.30px">2440 h 21 m</span></div></div>
<div class="r" style="top:642px;height:19px;line-height:20px"><div class="c" style="left:0.0px;width:153.0px;"><span style="letter-spacing:0.34px">Story</span></div><div class="c" style="left:153.0px;width:153.2px;"></div><div class="c" style="left:306.2px;width:153.2px;"></div><div class="c" style="left:459.4px;width:153.0px;"><span style="letter-spacing:0.26px">Lowest</span></div><div class="c" style="left:612.4px;width:153.2px;"><span style="letter-spacing:0.39px">Andrii Zakopets</span></div><div class="c f" style="left:765.6px;width:153.9px;background:#ebecf0;color:#4d586c;box-shadow:0 -1px #ebecf0;"><span style="letter-spacing:-0.57px">BACKLOG</span></div><div class="c" style="left:918.5px;width:136.9px;"><span style="letter-spacing:0.01px">SLA Goal - 1</span></div><div class="c" style="left:1055.4px;width:137.1px;"><span style="letter-spacing:0.14px">In Progress, Exceeded</span></div><div class="c" style="left:1192.5px;width:136.6px;"><span style="letter-spacing:0.34px">6 h 20 m</span></div><div class="c f j" style="left:1329.1px;width:137.7px;background:#fe8e72;box-shadow:0 -1px #fe8e72;"><span style="letter-spacing:0.20px">-2729 h 53 m</span></div><div class="c" style="left:1465.8px;width:136.7px;"><span style="letter-spacing:0.30px">2736 h 14 m</span></div></div>
<div class="r" style="top:661px;height:20px;line-height:22px"><div class="c" style="left:0.0px;width:153.0px;"><span style="letter-spacing:0.34px">Story</span></div><div class="c lk" style="left:153.0px;width:153.2px;"><span style="letter-spacing:0.30px">ADI-155</span></div><div class="c" style="left:306.2px;width:153.2px;"><span style="letter-spacing:0.30px">test 21:09</span></div><div class="c" style="left:459.4px;width:153.0px;"><span style="letter-spacing:0.26px">Lowest</span></div><div class="c" style="left:612.4px;width:153.2px;"><span style="letter-spacing:0.23px">Anastasia Ushakova</span></div><div class="c f" style="left:765.6px;width:153.9px;background:#e3fcef;color:#2d7a57;box-shadow:0 -1px #e3fcef;"><span style="letter-spacing:-0.33px">DONE</span></div><div class="c" style="left:918.5px;width:136.9px;"><span style="letter-spacing:0.01px">SLA Goal - 1</span></div><div class="c" style="left:1055.4px;width:137.1px;"><span style="letter-spacing:0.34px">Exceeded, Completed</span></div><div class="c" style="left:1192.5px;width:136.6px;"><span style="letter-spacing:0.34px">6 h 20 m</span></div><div class="c f j" style="left:1329.1px;width:137.7px;background:#fe8e72;box-shadow:0 -1px #fe8e72;"><span style="letter-spacing:0.20px">-877 h 18 m</span></div><div class="c" style="left:1465.8px;width:136.7px;"><span style="letter-spacing:0.30px">883 h 39 m</span></div></div>
<div class="r" style="top:681px;height:19px;line-height:20px"><div class="c" style="left:0.0px;width:153.0px;"><span style="letter-spacing:0.34px">Story</span></div><div class="c lk" style="left:153.0px;width:153.2px;"><span style="letter-spacing:0.30px">ADI-151</span></div><div class="c" style="left:306.2px;width:153.2px;"><span style="letter-spacing:0.30px">cf pause</span></div><div class="c" style="left:459.4px;width:153.0px;"><span style="letter-spacing:0.26px">Lowest</span></div><div class="c" style="left:612.4px;width:153.2px;"><span style="letter-spacing:0.39px">Andrii Zakopets</span></div><div class="c f" style="left:765.6px;width:153.9px;background:#ebecf0;color:#4d586c;box-shadow:0 -1px #ebecf0;"><span style="letter-spacing:-0.57px">BACKLOG</span></div><div class="c" style="left:918.5px;width:136.9px;"><span style="letter-spacing:0.01px">SLA Goal - 1</span></div><div class="c" style="left:1055.4px;width:137.1px;"><span style="letter-spacing:0.14px">In Progress, Exceeded</span></div><div class="c" style="left:1192.5px;width:136.6px;"><span style="letter-spacing:0.34px">6 h 20 m</span></div><div class="c f j" style="left:1329.1px;width:137.7px;background:#fe8e72;box-shadow:0 -1px #fe8e72;"><span style="letter-spacing:0.20px">-3211 h 9 m</span></div><div class="c" style="left:1465.8px;width:136.7px;"><span style="letter-spacing:0.30px">3217 h 30 m</span></div></div>
<div class="r" style="top:700px;height:19px;line-height:20px"><div class="c" style="left:0.0px;width:153.0px;"><span style="letter-spacing:0.34px">Story</span></div><div class="c lk" style="left:153.0px;width:153.2px;"><span style="letter-spacing:0.30px">ADI-150</span></div><div class="c" style="left:306.2px;width:153.2px;"><span style="letter-spacing:0.30px">custom field test</span></div><div class="c" style="left:459.4px;width:153.0px;"><span style="letter-spacing:0.26px">Lowest</span></div><div class="c" style="left:612.4px;width:153.2px;"><span style="letter-spacing:0.39px">Andrii Zakopets</span></div><div class="c f" style="left:765.6px;width:153.9px;background:#ebecf0;color:#4d586c;box-shadow:0 -1px #ebecf0;"><span style="letter-spacing:-0.57px">BACKLOG</span></div><div class="c" style="left:918.5px;width:136.9px;"><span style="letter-spacing:0.01px">SLA Goal - 1</span></div><div class="c" style="left:1055.4px;width:137.1px;"><span style="letter-spacing:0.14px">In Progress, Exceeded</span></div><div class="c" style="left:1192.5px;width:136.6px;"><span style="letter-spacing:0.34px">6 h 20 m</span></div><div class="c f j" style="left:1329.1px;width:137.7px;background:#fe8e72;box-shadow:0 -1px #fe8e72;"><span style="letter-spacing:0.20px">-3211 h 17 m</span></div><div class="c" style="left:1465.8px;width:136.7px;"><span style="letter-spacing:0.30px">3217 h 38 m</span></div></div>
<div class="r" style="top:719px;height:19px;line-height:20px"><div class="c" style="left:0.0px;width:153.0px;"><span style="letter-spacing:0.34px">Story</span></div><div class="c lk" style="left:153.0px;width:153.2px;"><span style="letter-spacing:0.30px">ADI-149</span></div><div class="c" style="left:306.2px;width:153.2px;"><span style="letter-spacing:0.30px">test multitrigger 2</span></div><div class="c" style="left:459.4px;width:153.0px;"><span style="letter-spacing:0.26px">Lowest</span></div><div class="c" style="left:612.4px;width:153.2px;"><span style="letter-spacing:0.23px">Anastasia Ushakova</span></div><div class="c f" style="left:765.6px;width:153.9px;background:#e3fcef;color:#2d7a57;box-shadow:0 -1px #e3fcef;"><span style="letter-spacing:-0.76px">RESOLVED</span></div><div class="c" style="left:918.5px;width:136.9px;"><span style="letter-spacing:0.01px">SLA Goal - 1</span></div><div class="c" style="left:1055.4px;width:137.1px;"><span style="letter-spacing:0.14px">In Progress, Exceeded</span></div><div class="c" style="left:1192.5px;width:136.6px;"><span style="letter-spacing:0.34px">6 h 20 m</span></div><div class="c f j" style="left:1329.1px;width:137.7px;background:#fe8e72;box-shadow:0 -1px #fe8e72;"><span style="letter-spacing:0.20px">-3213 h 9 m</span></div><div class="c" style="left:1465.8px;width:136.7px;"><span style="letter-spacing:0.30px">3219 h 30 m</span></div></div>
<div class="r" style="top:738px;height:19px;line-height:20px"><div class="c" style="left:0.0px;width:153.0px;"></div><div class="c" style="left:153.0px;width:153.2px;"></div><div class="c" style="left:306.2px;width:153.2px;"></div><div class="c" style="left:459.4px;width:153.0px;"></div><div class="c" style="left:612.4px;width:153.2px;"></div><div class="c f" style="left:765.6px;width:153.9px;background:#deeaff;box-shadow:0 -1px #deeaff;"></div><div class="c" style="left:918.5px;width:136.9px;"></div><div class="c" style="left:1055.4px;width:137.1px;"></div><div class="c" style="left:1192.5px;width:136.6px;"></div><div class="c f" style="left:1329.1px;width:137.7px;background:#fe8e72;box-shadow:0 -1px #fe8e72;"></div><div class="c" style="left:1465.8px;width:136.7px;"></div></div>
</div>
<div class="rh" style="top:200.00px;height:18.00px;line-height:16.50px">2</div>
<div class="rh" style="top:218.00px;height:18.00px;line-height:16.50px">3</div>
<div class="rh" style="top:236.00px;height:18.00px;line-height:16.50px">4</div>
<div class="rh" style="top:254.00px;height:19.00px;line-height:17.50px">5</div>
<div class="rh" style="top:273.00px;height:18.00px;line-height:16.50px">6</div>
<div class="rh" style="top:291.00px;height:18.00px;line-height:16.50px">7</div>
<div class="rh" style="top:309.00px;height:18.00px;line-height:16.50px">8</div>
<div class="rh" style="top:327.00px;height:18.00px;line-height:16.50px">9</div>
<div class="rh" style="top:345.00px;height:19.00px;line-height:17.50px">10</div>
<div class="rh" style="top:364.00px;height:18.00px;line-height:16.50px">11</div>
<div class="rh" style="top:382.00px;height:18.00px;line-height:16.50px">12</div>
<div class="rh" style="top:400.00px;height:18.00px;line-height:16.50px">13</div>
<div class="rh" style="top:418.00px;height:19.00px;line-height:17.50px">14</div>
<div class="rh" style="top:437.00px;height:18.00px;line-height:16.50px">15</div>
<div class="rh" style="top:455.00px;height:18.00px;line-height:16.50px">16</div>
<div class="rh" style="top:473.00px;height:18.00px;line-height:16.50px">17</div>
<div class="rh" style="top:491.00px;height:18.00px;line-height:16.50px">18</div>
<div class="rh" style="top:509.00px;height:19.00px;line-height:17.50px">19</div>
<div class="rh" style="top:528.00px;height:19.00px;line-height:17.50px">20</div>
<div class="rh" style="top:547.00px;height:19.00px;line-height:17.50px">21</div>
<div class="rh" style="top:566.00px;height:19.00px;line-height:17.50px">22</div>
<div class="rh" style="top:585.00px;height:19.00px;line-height:17.50px">23</div>
<div class="rh" style="top:604.00px;height:19.00px;line-height:17.50px">24</div>
<div class="rh" style="top:623.00px;height:19.00px;line-height:17.50px">25</div>
<div class="rh" style="top:642.00px;height:19.00px;line-height:17.50px">26</div>
<div class="rh" style="top:661.00px;height:20.00px;line-height:18.50px">27</div>
<div class="rh" style="top:681.00px;height:19.00px;line-height:17.50px">28</div>
<div class="rh" style="top:700.00px;height:19.00px;line-height:17.50px">29</div>
<div class="rh" style="top:719.00px;height:19.00px;line-height:17.50px">30</div>
<div class="rh" style="top:738.00px;height:10px"></div>

<!-- freeze bar -->
<div class="abs" style="left:0;top:195.5px;width:42px;height:4px;background:#b9b9b9"></div>
<div class="abs" style="left:42px;top:195.5px;width:1558px;height:4px;background:#dadee6"></div>

<!-- header row 1 -->
<div class="h1" style="left:41.5px;width:153.0px"><div class="h1t"><span style="letter-spacing:-0.10px">Issue Type</span></div></div>
<div class="h1" style="left:194.5px;width:153.2px"><div class="h1t"><span style="letter-spacing:-0.21px">Issue Key</span></div><svg class="fi" viewBox="0 0 24 24"><path d="M10 17.800h4v-1.600h-4zM3 6.200v1.600h18V6.200zM6 12.800h12v-1.600H6z"/></svg></div>
<div class="h1" style="left:347.7px;width:153.2px"><div class="h1t"><span style="letter-spacing:0.21px">Summary</span></div><svg class="fi" viewBox="0 0 24 24"><path d="M10 17.800h4v-1.600h-4zM3 6.200v1.600h18V6.200zM6 12.800h12v-1.600H6z"/></svg></div>
<div class="h1" style="left:500.9px;width:153.0px"><div class="h1t"><span style="letter-spacing:0.24px">Priority</span></div><svg class="fi" viewBox="0 0 24 24"><path d="M10 17.800h4v-1.600h-4zM3 6.200v1.600h18V6.200zM6 12.800h12v-1.600H6z"/></svg></div>
<div class="h1" style="left:653.9px;width:153.2px"><div class="h1t"><span style="letter-spacing:-0.21px">Assignee</span></div><svg class="fi" viewBox="0 0 24 24"><path d="M10 17.800h4v-1.600h-4zM3 6.200v1.600h18V6.200zM6 12.800h12v-1.600H6z"/></svg></div>
<div class="h1" style="left:807.1px;width:152.9px"><div class="h1t"><span style="letter-spacing:-0.02px">Status</span></div><svg class="fi" viewBox="0 0 24 24"><path d="M10 17.800h4v-1.600h-4zM3 6.200v1.600h18V6.200zM6 12.800h12v-1.600H6z"/></svg></div>
<div class="h1" style="left:960.0px;width:136.9px"><div class="h1t"><span style="letter-spacing:0.26px">appdevi - Goal name</span></div><svg class="fi" viewBox="0 0 24 24"><path d="M10 17.800h4v-1.600h-4zM3 6.200v1.600h18V6.200zM6 12.800h12v-1.600H6z"/></svg></div>
<div class="h1" style="left:1096.9px;width:137.1px"><div class="h1t"><span style="letter-spacing:0.00px">appdevi - SLA status</span></div><svg class="fi" viewBox="0 0 24 24"><path d="M10 17.800h4v-1.600h-4zM3 6.200v1.600h18V6.200zM6 12.800h12v-1.600H6z"/></svg></div>
<div class="h1" style="left:1234.0px;width:136.6px"><div class="h1t"><span style="letter-spacing:0.32px">appdevi - Goal time</span></div><svg class="fi" viewBox="0 0 24 24"><path d="M10 17.800h4v-1.600h-4zM3 6.200v1.600h18V6.200zM6 12.800h12v-1.600H6z"/></svg></div>
<div class="h1" style="left:1370.6px;width:136.7px"><div class="h1t"><span style="letter-spacing:0.15px">appdevi - Remaining</span></div><svg class="fi" viewBox="0 0 24 24"><path d="M10 17.800h4v-1.600h-4zM3 6.200v1.600h18V6.200zM6 12.800h12v-1.600H6z"/></svg></div>
<div class="h1" style="left:1507.3px;width:136.7px"><div class="h1t"><span style="letter-spacing:0.00px">appdevi - Elapsed</span></div><svg class="fi" viewBox="0 0 24 24"><path d="M10 17.800h4v-1.600h-4zM3 6.200v1.600h18V6.200zM6 12.800h12v-1.600H6z"/></svg></div>
<div class="rh" style="top:177px;height:18.5px;line-height:18px;background:#202124;border:none">1</div>
<!-- selected cell A1 -->
<div class="abs" style="left:41px;top:177px;width:153.5px;height:19.5px;border:2px solid #1a73e8;border-top-width:1px"></div>
<div class="abs" style="left:191px;top:192px;width:6px;height:2px;background:#1a73e8"></div>
<!-- green filter button in A1 -->
<div class="abs" style="left:178px;top:179.3px;width:13.7px;height:13.5px;background:#188038;border-radius:1.5px"></div>
<svg style="left:179.3px;top:180.5px;width:11px;height:11px" viewBox="0 0 24 24"><path fill="#fff" d="M10 19h4v-2.800h-4zM2 5v2.800h20V5zM6 13.400h12v-2.800H6z"/></svg>

<!-- column header row -->
<div id="chrow" class="abs"></div>
<div class="ch sel" style="left:41.5px;width:152.0px">A</div>
<div class="ch" style="left:194.5px;width:153.2px">B</div>
<div class="ch" style="left:347.7px;width:153.2px">C</div>
<div class="ch" style="left:500.9px;width:153.0px">D</div>
<div class="ch" style="left:653.9px;width:153.2px">E</div>
<div class="ch" style="left:807.1px;width:152.9px">F</div>
<div class="ch" style="left:960.0px;width:136.9px">G</div>
<div class="ch" style="left:1096.9px;width:137.1px">H</div>
<div class="ch" style="left:1234.0px;width:136.6px">I</div>
<div class="ch" style="left:1370.6px;width:136.7px">J</div>
<div class="ch" style="left:1507.3px;width:136.7px">K</div>
<div class="abs" style="left:0;top:156px;width:37px;height:21px;background:#3c4043"></div>
<div class="abs" style="left:37px;top:156px;width:4px;height:21px;background:#bdbdbd"></div>

<!-- dark filter-view bar -->
<div id="fbar" class="abs"></div>
<div class="t" style="left:52.5px;top:126.74px;font-size:12.0px;font-weight:700;color:#fff;letter-spacing:-0.58px">Name:</div>
<div class="t" style="left:94.8px;top:126.74px;font-size:12.0px;font-weight:700;color:#fff;letter-spacing:-0.56px">Filter 1</div>
<div class="t" style="left:264.5px;top:126.74px;font-size:12.0px;font-weight:700;color:#fff;letter-spacing:-0.75px">Range:</div>
<div class="t" style="left:309.0px;top:126.74px;font-size:12.0px;font-weight:700;color:#fff;letter-spacing:-0.33px">A1:Z145</div>

<!-- ============ TOP CHROME ============ -->
<div id="strip" class="abs"></div><div id="strip2" class="abs"></div>
<!-- sheets logo -->
<svg style="left:21px;top:15.7px;width:23.7px;height:32.4px" viewBox="0 0 24 33">
<path d="M2.2 0H16l8 8v22.8c0 1.2-1 2.2-2.2 2.2H2.2C1 33 0 32 0 30.800V2.2C0 1 1 0 2.200 0z" fill="#2ca94f"/>
<path d="M16 0l8 8h-5.800C17 8 16 7 16 5.800z" fill="#17803a"/>
<path d="M4.500 12.500h15v11h-15zM6.600 14.600v2.400h4.300v-2.400zM13 14.600v2.400h4.400v-2.400zM6.600 19v2.400h4.300V19zM13 19v2.400h4.400V19z" fill="#fff" fill-rule="evenodd"/>
</svg>
<div class="t" style="left:65.6px;top:12.42px;font-size:16.4px;color:#1f1f1f;letter-spacing:-0.21px">SLA Time and Report  Report 2022-03-21 17_43.xlsx</div>
<!-- xlsx badge -->
<div class="abs" style="left:453px;top:14px;width:41.5px;height:18.5px;background:#188038;border-radius:3.5px"></div>
<div class="t" style="left:457.3px;top:14.39px;font-size:11.0px;font-weight:700;color:#fff;letter-spacing:-0.02px">.XLSX</div>
<!-- star, move, cloud -->
<svg style="left:513px;top:13.7px;width:16.500px;height:16.500px" viewBox="0 0 24 24"><path fill="#444746" d="M22 9.240l-7.190-.620L12 2 9.190 8.630 2 9.240l5.460 4.730L5.820 21 12 17.270 18.180 21l-1.630-7.030L22 9.240zM12 15.400l-3.760 2.270 1-4.280-3.320-2.880 4.380-.380L12 6.100l1.710 4.040 4.380.380-3.320 2.880 1 4.280L12 15.400z"/></svg>
<svg style="left:539.8px;top:13.8px;width:16.400px;height:16.400px" viewBox="0 0 24 24"><path fill="#444746" d="M20 6h-8l-2-2H4c-1.100 0-1.990.900-1.990 2L2 18c0 1.100.900 2 2 2h16c1.100 0 2-.900 2-2V8c0-1.100-.900-2-2-2zm0 12H4V6h5.170l2 2H20v10zm-8-1l4-4-4-4v3H8v2h4v3z"/></svg>
<svg style="left:568.500px;top:14.700px;width:15px;height:15px" viewBox="0 0 24 24"><path fill="#444746" d="M19.350 10.040C18.670 6.590 15.640 4 12 4 9.110 4 6.600 5.640 5.350 8.040 2.340 8.360 0 10.910 0 14c0 3.310 2.690 6 6 6h13c2.760 0 5-2.240 5-5 0-2.640-2.050-4.780-4.650-4.960zM19 18H6c-2.210 0-4-1.790-4-4 0-2.050 1.530-3.760 3.560-3.970l1.070-.110.500-.950C8.080 7.140 9.940 6 12 6c2.620 0 4.880 1.860 5.390 4.430l.300 1.500 1.530.110c1.560.100 2.780 1.410 2.780 2.960 0 1.650-1.350 3-3 3zm-9-3.820l-2.090-2.090L6.500 13.500 10 17l6.010-6.010-1.410-1.410z"/></svg>
<!-- menus -->
<div class="t" style="left:65.0px;top:37.07px;font-size:12.2px;color:#202124;letter-spacing:0.21px">File</div>
<div class="t" style="left:98.5px;top:37.07px;font-size:12.2px;color:#202124;letter-spacing:0.12px">Edit</div>
<div class="t" style="left:133.4px;top:37.07px;font-size:12.2px;color:#202124;letter-spacing:0.35px">View</div>
<div class="t" style="left:174.4px;top:37.07px;font-size:12.2px;color:#202124;letter-spacing:0.49px">Insert</div>
<div class="t" style="left:221.3px;top:37.07px;font-size:12.2px;color:#202124;letter-spacing:0.38px">Format</div>
<div class="t" style="left:275.9px;top:37.07px;font-size:12.2px;color:#202124;letter-spacing:0.09px">Data</div>
<div class="t" style="left:316.3px;top:37.07px;font-size:12.2px;color:#202124;letter-spacing:0.45px">Tools</div>
<div class="t" style="left:360.5px;top:37.07px;font-size:12.2px;color:#202124;letter-spacing:0.28px">Help</div>
<div class="t" style="left:406.6px;top:36.87px;font-size:12.2px;color:#747a80;letter-spacing:0.27px;text-decoration:underline">Last edit was seconds ago</div>
<!-- comment + present -->
<svg style="left:1502.7px;top:21.3px;width:21.6px;height:21.6px" viewBox="0 0 24 24"><path fill="#3c4043" d="M21.990 4c0-1.100-.890-2-1.990-2H4c-1.100 0-2 .900-2 2v12c0 1.100.900 2 2 2h14l4 4-.010-18zM20 4v13.170L18.830 16H4V4h16zM6 12h12v2H6zm0-3h12v2H6zm0-3h12v2H6z"/></svg>
<div class="abs" style="left:1543.5px;top:15.500px;width:49px;height:32.500px;border:1px solid #dadce0;border-radius:16.500px"></div>
<svg style="left:1553px;top:22px;width:23px;height:19px" viewBox="1553 22 23 19" fill="none" stroke="#1a73e8"><rect x="1555.300" y="24.700" width="18" height="14.300" rx="1" stroke-width="1.700"/><path d="M1564.300 35.800v-7M1561 31.600l3.300-3.300 3.300 3.300" stroke-width="1.600"/></svg>
<svg style="left:1579.50px;top:30.05px;width:6.6px;height:3.5px" viewBox="0 0 10 5" preserveAspectRatio="none"><path fill="#1a73e8" d="M0 0h10L5 5z"/></svg>

<div class="hl" style="top:61px"></div>
<!-- ============ TOOLBAR ============ -->
<svg class="tb" style="left:31.500px;top:71px;width:17px;height:17px" viewBox="0 0 24 24"><path d="M12.500 8c-2.650 0-5.050.990-6.900 2.600L2 7v9h9l-3.620-3.620c1.390-1.160 3.160-1.880 5.120-1.880 3.540 0 6.550 2.310 7.600 5.500l2.370-.780C21.080 11.030 17.150 8 12.500 8z"/></svg>
<svg class="tb" style="left:57.200px;top:71px;width:17px;height:17px" viewBox="0 0 24 24"><path d="M18.400 10.600C16.550 8.990 14.150 8 11.500 8c-4.650 0-8.580 3.030-9.960 7.220L3.900 16c1.050-3.190 4.050-5.500 7.600-5.500 1.950 0 3.730.720 5.120 1.880L13 16h9V7l-3.600 3.600z"/></svg>
<svg class="tb" style="left:82.500px;top:70.900px;width:17px;height:17px" viewBox="0 0 24 24"><path d="M19 8H5c-1.660 0-3 1.340-3 3v6h4v4h12v-4h4v-6c0-1.660-1.340-3-3-3zm-3 11H8v-5h8v5zm3-7c-.550 0-1-.450-1-1s.450-1 1-1 1 .450 1 1-.450 1-1 1zm-1-9H6v4h12V3z"/></svg>
<div class="vs" style="left:133px"></div>
<div class="t" style="left:148.0px;top:68.48px;font-size:11.3px;color:#50545a;letter-spacing:-0.73px">100%</div>
<svg style="left:186.45px;top:78.15px;width:6.3px;height:3.4px" viewBox="0 0 10 5" preserveAspectRatio="none"><path fill="#50545a" d="M0 0h10L5 5z"/></svg>
<div class="vs" style="left:200.500px"></div>
<div class="t" style="left:214.5px;top:68.68px;font-size:11.3px;color:#50545a;letter-spacing:0.00px">$</div>
<div class="t" style="left:238.9px;top:68.68px;font-size:11.3px;color:#50545a;letter-spacing:-1.05px">%</div>
<div class="t" style="left:260.8px;top:68.68px;font-size:11.3px;color:#50545a;letter-spacing:-0.21px">.0</div>
<svg style="left:267px;top:83.6px;width:8px;height:6px" viewBox="0 0 8 6"><path d="M8 2.500H2.600V.6L0 3l2.600 2.400V3.500H8z" fill="#50545a"/></svg>
<div class="t" style="left:286.0px;top:68.68px;font-size:11.3px;color:#50545a;letter-spacing:-0.07px">.00</div>
<svg style="left:294px;top:83.6px;width:8px;height:6px" viewBox="0 0 8 6"><path d="M0 2.500h5.400V.6L8 3 5.400 5.400V3.500H0z" fill="#50545a"/></svg>
<div class="t" style="left:310.3px;top:68.68px;font-size:11.3px;color:#50545a;letter-spacing:-0.29px">123</div>
<svg style="left:329.85px;top:78.20px;width:6.3px;height:3.4px" viewBox="0 0 10 5" preserveAspectRatio="none"><path fill="#50545a" d="M0 0h10L5 5z"/></svg>
<div class="vs" style="left:345.300px"></div>
<div class="t" style="left:361.4px;top:68.68px;font-size:11.3px;color:#50545a;letter-spacing:-0.15px">Calibri</div>
<svg style="left:434.35px;top:78.15px;width:6.3px;height:3.4px" viewBox="0 0 10 5" preserveAspectRatio="none"><path fill="#50545a" d="M0 0h10L5 5z"/></svg>
<div class="vs" style="left:449.400px"></div>
<div class="t" style="left:464.8px;top:68.48px;font-size:11.3px;color:#50545a;letter-spacing:-0.54px">12</div>
<svg style="left:502.45px;top:78.15px;width:6.3px;height:3.4px" viewBox="0 0 10 5" preserveAspectRatio="none"><path fill="#50545a" d="M0 0h10L5 5z"/></svg>
<div class="vs" style="left:516.800px"></div>
<div class="abs" style="left:522px;top:67.400px;width:24px;height:23.600px;background:#e6f4ea;border-radius:2.500px"></div>
<svg style="left:525.300px;top:70.500px;width:17.600px;height:17.600px" viewBox="0 0 24 24"><path fill="#188038" d="M15.600 10.790c.970-.670 1.650-1.770 1.650-2.790 0-2.260-1.750-4-4-4H7v14h7.040c2.090 0 3.710-1.700 3.710-3.790 0-1.520-.860-2.820-2.150-3.420zM10 6.500h3c.830 0 1.500.670 1.500 1.500s-.670 1.500-1.500 1.500h-3v-3zm3.500 9H10v-3h3.500c.830 0 1.500.670 1.500 1.500s-.670 1.500-1.500 1.500z"/></svg>
<div class="abs" style="left:602.400px;top:87.200px;width:18.600px;height:2.800px;background:#000"></div>
<div class="vs" style="left:629.200px"></div>
<svg class="tb" style="left:638.600px;top:70.800px;width:16px;height:16px" viewBox="0 0 24 24"><path d="M16.560 8.940L7.620 0 6.210 1.410l2.380 2.380-5.150 5.150c-.590.590-.590 1.540 0 2.120l5.500 5.500c.290.290.680.440 1.060.440s.770-.150 1.060-.440l5.500-5.500c.590-.580.590-1.530 0-2.120zM5.210 10L10 5.210 14.790 10H5.210zM19 11.500s-2 2.170-2 3.500c0 1.100.900 2 2 2s2-.900 2-2c0-1.330-2-3.500-2-3.500z"/></svg>
<svg class="tb" style="left:665.700px;top:71px;width:17px;height:17px" viewBox="0 0 24 24"><path d="M3 3v18h18V3H3zm8 16H5v-6h6v6zm0-8H5V5h6v6zm8 8h-6v-6h6v6zm0-8h-6V5h6v6z"/></svg>
<svg style="left:718.45px;top:78.15px;width:6.3px;height:3.4px" viewBox="0 0 10 5" preserveAspectRatio="none"><path fill="#c4c7c5" d="M0 0h10L5 5z"/></svg>
<div class="vs" style="left:733.400px"></div>
<svg style="left:762.25px;top:78.15px;width:6.3px;height:3.4px" viewBox="0 0 10 5" preserveAspectRatio="none"><path fill="#50545a" d="M0 0h10L5 5z"/></svg>
<svg style="left:797.45px;top:78.15px;width:6.3px;height:3.4px" viewBox="0 0 10 5" preserveAspectRatio="none"><path fill="#50545a" d="M0 0h10L5 5z"/></svg>
<svg style="left:833.25px;top:78.15px;width:6.3px;height:3.4px" viewBox="0 0 10 5" preserveAspectRatio="none"><path fill="#50545a" d="M0 0h10L5 5z"/></svg>
<svg style="left:868.85px;top:78.15px;width:6.3px;height:3.4px" viewBox="0 0 10 5" preserveAspectRatio="none"><path fill="#50545a" d="M0 0h10L5 5z"/></svg>
<div class="vs" style="left:884.200px"></div>
<svg class="tb" style="left:891.500px;top:70px;width:19px;height:19px" viewBox="0 0 24 24"><path d="M3.900 12c0-1.710 1.390-3.100 3.100-3.100h4V7H7c-2.760 0-5 2.240-5 5s2.240 5 5 5h4v-1.900H7c-1.710 0-3.100-1.390-3.100-3.100zM8 13h8v-2H8v2zm9-6h-4v1.900h4c1.710 0 3.100 1.390 3.100 3.100s-1.390 3.100-3.100 3.100h-4V17h4c2.760 0 5-2.240 5-5s-2.240-5-5-5z"/></svg>
<svg class="tb" style="left:942.600px;top:70px;width:19.200px;height:19.200px" viewBox="0 0 24 24"><path d="M9 17H7v-7h2v7zm4 0h-2V7h2v10zm4 0h-2v-4h2v4zm2 2H5V5h14v14zm0-16H5c-1.100 0-2 .900-2 2v14c0 1.100.900 2 2 2h14c1.100 0 2-.900 2-2V5c0-1.100-.900-2-2-2z"/></svg>
<svg style="left:990.20px;top:79.10px;width:4.6px;height:2.6px" viewBox="0 0 10 5" preserveAspectRatio="none"><path fill="#50545a" d="M0 0h10L5 5z"/></svg>
<svg style="left:1026.20px;top:79.10px;width:4.6px;height:2.6px" viewBox="0 0 10 5" preserveAspectRatio="none"><path fill="#50545a" d="M0 0h10L5 5z"/></svg>
<svg style="left:0;top:60px;width:1100px;height:40px" viewBox="0 60 1100 40" fill="none" stroke="#3c4043" stroke-width="1.3">
<rect x="111" y="73" width="9" height="3.700" fill="#5f6368" stroke="#4a4e53" stroke-width=".6"/>
<path d="M120 75.500h2.300v3.850h-6.700v6" stroke-width="1.250"/>
<path d="M558 74.700h6.800M554.100 83.600h6.800M561.400 74.700l-3.900 8.900" stroke-width="1.300"/>
<path d="M579 80.400h12" stroke-width="1.250"/>
<path d="M588.200 76.800c-.300-1.600-1.500-2.500-3.300-2.500-1.900 0-3.200 1-3.200 2.400 0 .900.500 1.500 1.400 2M581.400 81.900c.200 1.800 1.600 2.800 3.600 2.800 2 0 3.300-1 3.300-2.500 0-.500-.100-.900-.300-1.200" stroke-width="1.350"/>
<path d="M606.800 82.900l4.600-10.700 4.600 10.700M608.400 79.300h6" stroke-width="1.250"/>
<g stroke="#c0c3c4" stroke-width="1.200">
<path d="M694.900 76v-2.400h5.500M702.600 73.600h5.500V76M694.900 82.400v2.400h5.500M702.600 84.800h5.500v-2.400"/>
<path d="M694.300 79.200h5.600M698.200 77.300l1.900 1.900-1.900 1.900M708.700 79.200h-5.600M704.800 77.300l-1.900 1.900 1.900 1.900"/>
</g>
<path d="M743.900 73.650h11.900M743.900 77.500h8.200M743.900 81.300h11.900M743.900 84.700h8.200" stroke-width="1.350" stroke-linecap="round"/>
<path d="M785.500 73.100v8.400M782.800 79.400l2.700 2.600 2.700-2.600M780.100 84.600h10.800" stroke-width="1.300"/>
<path d="M815.600 73.100v12.500M821.800 73.100v3M821.800 82.200v3.400M818.600 79.200h8M824.400 77l2.600 2.200-2.600 2.200" stroke-width="1.300"/>
<path d="M850.600 73.200l6.800 2.900-4.600 5.100zM854.400 84.900l9-8.600M860.300 75.900l3.400.200-.100 3.300" stroke-width="1.300"/>
<path d="M853.900 74.800l2 3.300" stroke-width="1"/>
<path d="M921.200 73.800h11.100v8.600h-9l-2.100 2.100zM924.400 78.100h4.800M926.800 75.700v4.800" stroke-width="1.250"/>
<path d="M971.900 74.500h10l-4 5.300v4.600h-2v-4.600z" stroke-width="1.250" stroke-linejoin="round"/>
<path d="M1016.600 73.800h-8.500l5 5.400-5 5.400h8.700" stroke-width="1.350"/>
</svg>

<div class="hl" style="top:96.500px;background:#e1e3e6"></div>
<!-- formula bar -->
<div class="t" style="left:7.3px;top:98.28px;font-size:11.3px;color:#202124;letter-spacing:-0.41px">A1</div>
<svg style="left:81.20px;top:107.60px;width:5.0px;height:2.8px" viewBox="0 0 10 5" preserveAspectRatio="none"><path fill="#5f6368" d="M0 0h10L5 5z"/></svg>
<div class="abs" style="left:93px;top:97px;width:1px;height:21px;background:#c9cacc"></div>
<div class="t" style="left:105.500px;top:96px;font-family:'Liberation Serif',serif;font-style:italic;font-size:19px;color:#bcbfc3;letter-spacing:-0.3px">fx</div>
<div class="abs" style="left:133px;top:100px;width:1px;height:16px;background:#d0d2d5"></div>
<div class="t" style="left:143.6px;top:98.28px;font-size:11.3px;color:#202124;letter-spacing:0.16px">Issue Type</div>

<!-- ============ FILTER POPUP ============ -->
<div id="menu" class="abs"></div>
<div class="t" style="left:214.3px;top:205.13px;font-size:12.9px;color:#4a4d51;letter-spacing:0.07px">Sort A</div>
<svg style="left:254.3px;top:213.9px;width:12px;height:6px" viewBox="0 0 12 6"><path d="M0 2.500h9.300L7.600.800l.700-.700L11.900 3 8.300 5.900l-.700-.700L9.300 3.500H0z" fill="#4a4d51"/></svg>
<div class="t" style="left:270.0px;top:205.13px;font-size:12.9px;color:#4a4d51;letter-spacing:-0.47px">Z</div>
<div class="t" style="left:214.3px;top:237.13px;font-size:12.9px;color:#4a4d51;letter-spacing:-0.05px">Sort Z</div>
<svg style="left:253.8px;top:245.9px;width:12px;height:6px" viewBox="0 0 12 6"><path d="M0 2.500h9.300L7.600.800l.700-.700L11.900 3 8.300 5.900l-.700-.700L9.300 3.500H0z" fill="#4a4d51"/></svg>
<div class="t" style="left:269.2px;top:237.13px;font-size:12.9px;color:#4a4d51;letter-spacing:-0.61px">A</div>
<div class="t" style="left:214.3px;top:268.83px;font-size:12.9px;color:#4a4d51;letter-spacing:0.13px">Sort by color</div>
<svg style="left:432.00px;top:275.60px;width:6.4px;height:6.8px" viewBox="0 0 5 10" preserveAspectRatio="none"><path fill="#6a6d70" d="M0 0v10L5 5z"/></svg>
<div class="abs" style="left:212px;top:301.600px;width:241.500px;height:1px;background:#e0e0e0"></div>
<div class="t" style="left:214.3px;top:313.13px;font-size:12.9px;color:#4a4d51;letter-spacing:0.11px">Filter by color</div>
<svg style="left:432.00px;top:320.10px;width:6.4px;height:6.8px" viewBox="0 0 5 10" preserveAspectRatio="none"><path fill="#6a6d70" d="M0 0v10L5 5z"/></svg>
<svg style="left:201.95px;top:349.60px;width:3.7px;height:7.2px" viewBox="0 0 5 10" preserveAspectRatio="none"><path fill="#4a4d51" d="M0 0v10L5 5z"/></svg>
<div class="t" style="left:214.3px;top:342.93px;font-size:12.9px;color:#4a4d51;letter-spacing:0.14px">Filter by condition</div>
<svg style="left:200.80px;top:380.65px;width:7.0px;height:3.5px" viewBox="0 0 10 5" preserveAspectRatio="none"><path fill="#4a4d51" d="M0 0h10L5 5z"/></svg>
<div class="t" style="left:214.3px;top:372.13px;font-size:12.9px;color:#4a4d51;letter-spacing:0.02px">Filter by values</div>
<div class="t" style="left:200.3px;top:401.25px;font-size:11.4px;color:#3367d6;letter-spacing:-0.02px;text-decoration:underline">Select all</div>
<div class="t" style="left:249.5px;top:401.25px;font-size:11.4px;color:#3367d6;letter-spacing:-0.30px">-</div>
<div class="t" style="left:255.0px;top:401.25px;font-size:11.4px;color:#3367d6;letter-spacing:-0.19px;text-decoration:underline">Clear</div>
<div class="abs" style="left:195px;top:439px;width:229.5px;height:32.5px;border:1px solid #d5d8dc;border-radius:3.500px"></div>
<svg style="left:404.300px;top:446.500px;width:17px;height:17px" viewBox="0 0 24 24"><path fill="#5f6368" d="M15.500 14h-.790l-.280-.270C15.410 12.590 16 11.110 16 9.500 16 5.910 13.090 3 9.500 3S3 5.910 3 9.500 5.910 16 9.500 16c1.610 0 3.090-.590 4.230-1.570l.270.280v.790l5 4.990L20.490 19l-4.990-5zm-6 0C7.010 14 5 11.990 5 9.500S7.010 5 9.500 5 14 7.010 14 9.500 11.990 14 9.500 14z"/></svg>
<div class="abs" style="left:420.300px;top:476.200px;width:7px;height:92px;background:#dadce0;border-radius:3.500px"></div>
<div class="abs" style="left:206px;top:504px;width:203px;height:29px;background:#cfcfcf"></div>
<svg style="left:216.7px;top:481.800px;width:15.600px;height:15.600px" viewBox="0 0 24 24"><path fill="#202124" d="M9 16.170L4.830 12l-1.420 1.410L9 19 21 7l-1.410-1.410z"/></svg>
<svg style="left:216.7px;top:511px;width:15.600px;height:15.600px" viewBox="0 0 24 24"><path fill="#202124" d="M9 16.170L4.830 12l-1.420 1.410L9 19 21 7l-1.410-1.410z"/></svg>
<svg style="left:216.7px;top:540.100px;width:15.600px;height:15.600px" viewBox="0 0 24 24"><path fill="#202124" d="M9 16.170L4.830 12l-1.420 1.410L9 19 21 7l-1.410-1.410z"/></svg>
<svg style="left:216.7px;top:569.300px;width:15.600px;height:15.600px" viewBox="0 0 24 24"><path fill="#202124" d="M9 16.170L4.830 12l-1.420 1.410L9 19 21 7l-1.410-1.410z"/></svg>
<div class="t" style="left:240.9px;top:478.64px;font-size:12.3px;color:#4a4d51;letter-spacing:0.14px">Bug</div>
<div class="t" style="left:240.9px;top:507.94px;font-size:12.3px;color:#4a4d51;letter-spacing:0.14px">Epic</div>
<div class="t" style="left:240.9px;top:536.94px;font-size:12.3px;color:#4a4d51;letter-spacing:0.39px">Project</div>
<div class="t" style="left:240.9px;top:566.14px;font-size:12.3px;color:#4a4d51;letter-spacing:0.26px">Story</div>
<div class="abs" style="left:212px;top:602px;width:241.500px;height:1px;background:#e0e0e0"></div>
<div class="abs" style="left:271px;top:623.300px;width:87.700px;height:32.400px;border:1px solid #dadce0;border-radius:4px;background:#fff"></div>
<div class="t" style="left:293.8px;top:629.07px;font-size:12.2px;color:#1e6e45;letter-spacing:0.68px">Cancel</div>
<div class="abs" style="left:373.800px;top:623.600px;width:64.200px;height:32px;border-radius:4px;background:#188038"></div>
<div class="t" style="left:395.8px;top:629.10px;font-size:12.4px;font-weight:700;color:#fff;letter-spacing:0.45px">OK</div>


<!-- ============ ANNOTATION ARROWS ============ -->
<svg style="left:0;top:0;width:1600px;height:740px;pointer-events:none" viewBox="0 0 1600 740">
<g fill="#3e7f7b" stroke="#3e7f7b" stroke-linecap="round" stroke-linejoin="miter">
<line x1="101.8" y1="336" x2="164" y2="222" stroke-width="5.2"/>
<polygon points="177.700,195.800 156,216.300 172,225.300" stroke-width="0.5"/>
<line x1="111" y1="632" x2="185.500" y2="556.500" stroke-width="5.2"/>
<polygon points="206.300,533.700 179.300,549.700 192.100,561.400" stroke-width="0.5"/>
</g></svg>
</body></html>
